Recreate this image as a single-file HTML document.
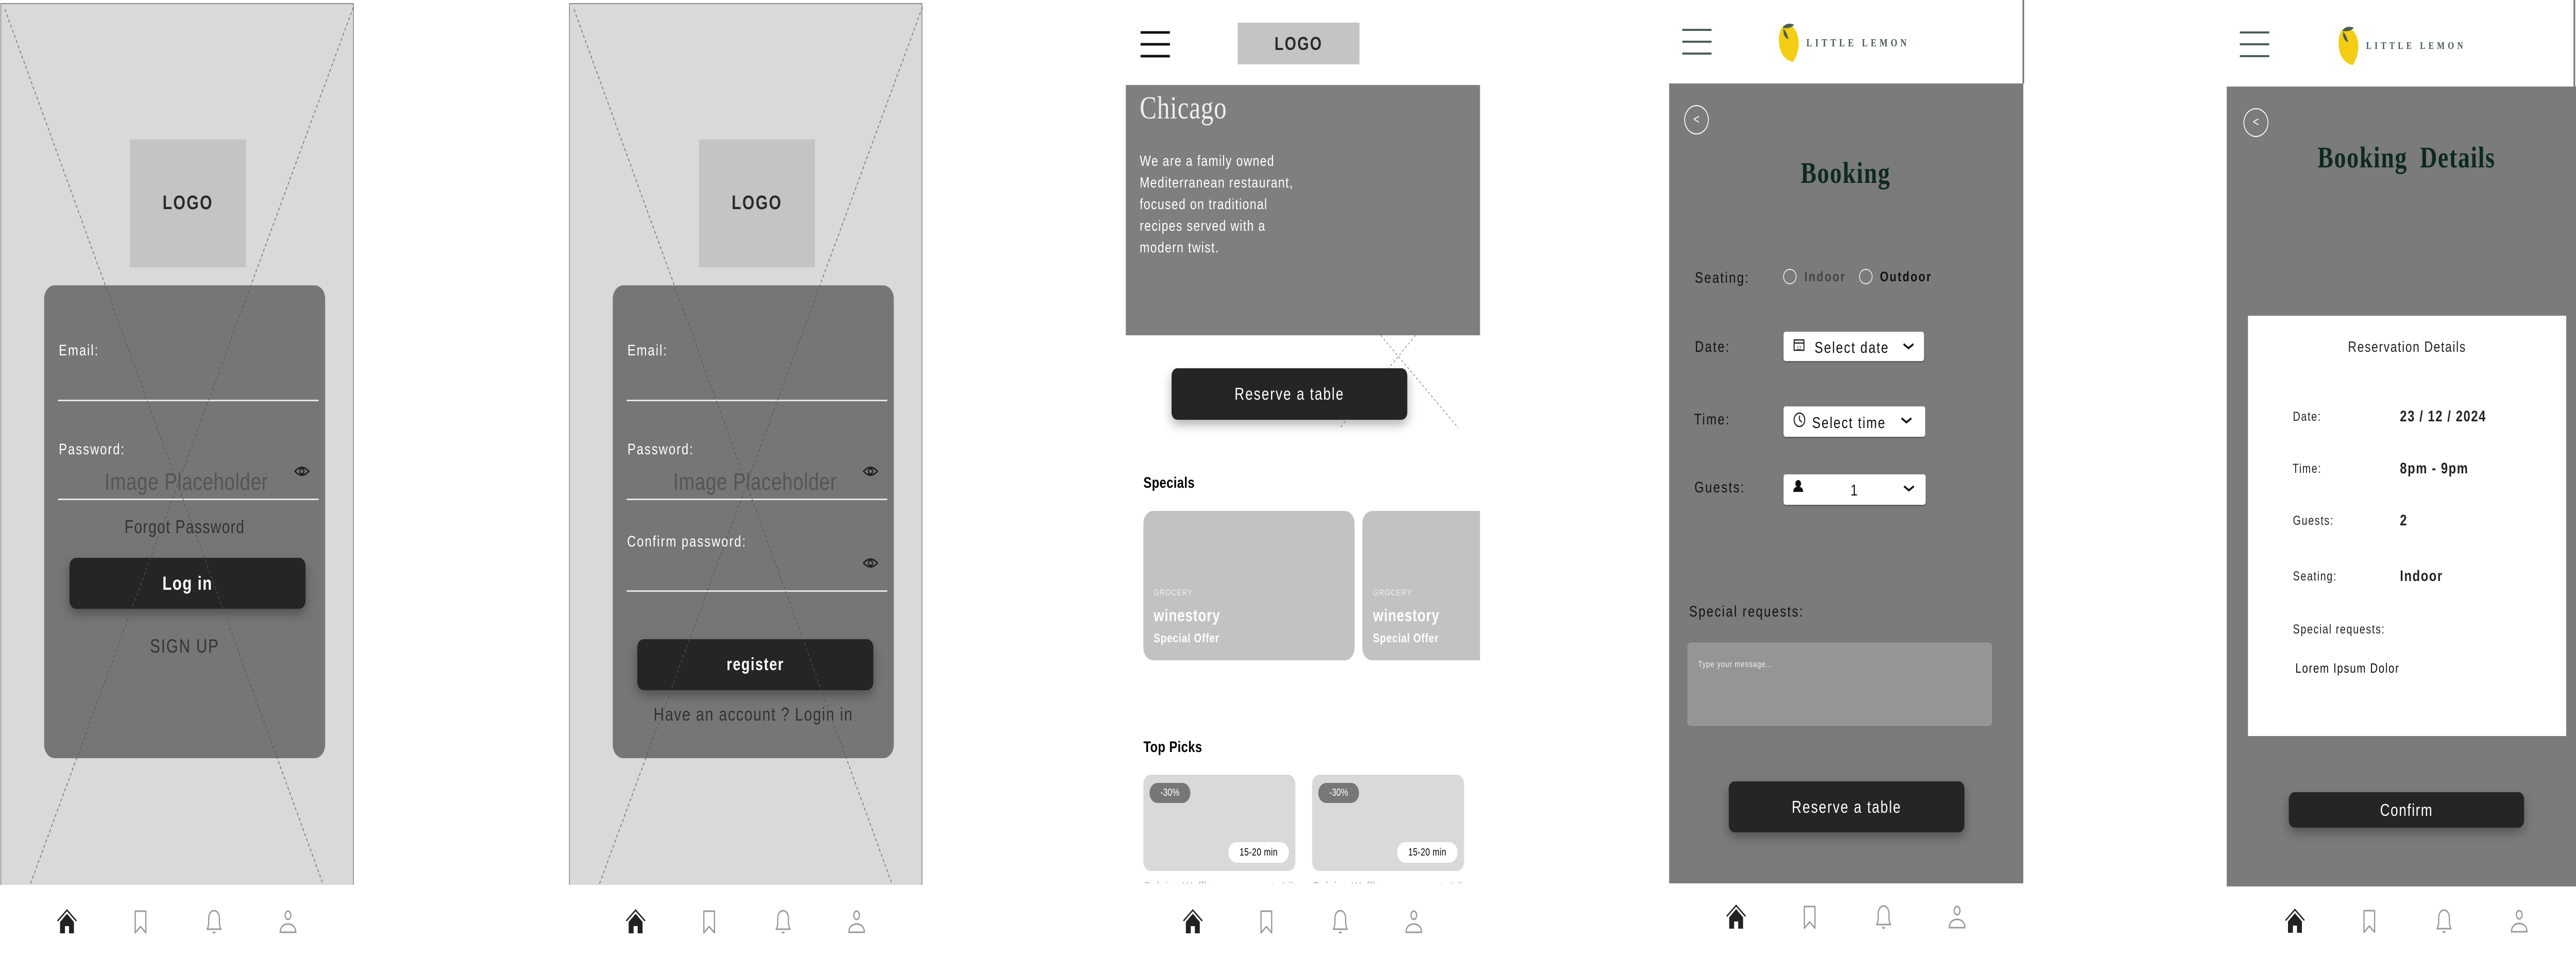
<!DOCTYPE html>
<html><head><meta charset="utf-8"><style>
*{margin:0;padding:0;box-sizing:border-box}
html,body{width:100%;height:1858px;background:#fff;overflow:hidden}
#w{position:absolute;left:0;top:0;width:6306px;height:1858px;transform-origin:0 0;transform:scaleX(0.7929);font-family:"Liberation Sans",sans-serif}
.a{position:absolute}
.t{position:absolute;white-space:nowrap;height:60px;line-height:60px}
.c{text-align:center}
.serif{font-family:"Liberation Serif",serif}
.btn{position:absolute;background:#252525;border-radius:16px;color:#fff;text-align:center;box-shadow:0 10px 22px rgba(0,0,0,.3)}
.line{position:absolute;height:3px;background:#e6e6e6}
.dd{position:absolute;background:#fff;border-radius:5px;box-shadow:0 2px 3px rgba(0,0,0,.3)}
</style></head><body><div id="w">

<!-- ============ SCREEN 1 ============ -->
<div class="a" style="left:1px;top:6px;width:865px;height:1712px;background:#d9d9d9;border:2px solid #8a8a8a;border-bottom:none"></div>
<div class="a" style="left:318px;top:271px;width:284px;height:248px;background:#c4c4c4"></div>
<div class="t c" style="left:318px;width:284px;top:364px;font-weight:bold;font-size:38px;letter-spacing:3px;color:#2a2a2a">LOGO</div>
<div class="a" style="left:108px;top:554px;width:688px;height:918px;background:#767676;border-radius:26px"></div>
<div class="t" style="left:144px;top:651px;font-size:30px;letter-spacing:2.5px;color:#fff">Email:</div>
<div class="line" style="left:142px;top:776px;width:638px"></div>
<div class="t" style="left:144px;top:843px;font-size:30px;letter-spacing:2.5px;color:#fff">Password:</div>
<div class="t" style="left:256px;top:905px;font-size:46px;letter-spacing:1px;color:#555">Image Placeholder</div>
<div class="line" style="left:142px;top:968px;width:638px"></div>
<div class="t c" style="left:108px;width:688px;top:993px;font-size:36px;letter-spacing:1.5px;color:#333">Forgot Password</div>
<div class="btn" style="left:170px;top:1083px;width:578px;height:99px;line-height:99px;font-size:37px;font-weight:bold;letter-spacing:2px">Log in</div>
<div class="t c" style="left:108px;width:688px;top:1225px;font-size:37px;letter-spacing:2.5px;color:#333">SIGN UP</div>

<!-- ============ SCREEN 2 ============ -->
<div class="a" style="left:1393px;top:6px;width:865px;height:1712px;background:#d9d9d9;border:2px solid #8a8a8a;border-bottom:none"></div>
<div class="a" style="left:1711px;top:271px;width:284px;height:248px;background:#c4c4c4"></div>
<div class="t c" style="left:1711px;width:284px;top:364px;font-weight:bold;font-size:38px;letter-spacing:3px;color:#2a2a2a">LOGO</div>
<div class="a" style="left:1500px;top:554px;width:688px;height:918px;background:#767676;border-radius:26px"></div>
<div class="t" style="left:1536px;top:651px;font-size:30px;letter-spacing:2.5px;color:#fff">Email:</div>
<div class="line" style="left:1534px;top:776px;width:638px"></div>
<div class="t" style="left:1536px;top:843px;font-size:30px;letter-spacing:2.5px;color:#fff">Password:</div>
<div class="t" style="left:1648px;top:905px;font-size:46px;letter-spacing:1px;color:#555">Image Placeholder</div>
<div class="line" style="left:1534px;top:968px;width:638px"></div>
<div class="t" style="left:1535px;top:1022px;font-size:30px;letter-spacing:2.5px;color:#fff">Confirm password:</div>
<div class="line" style="left:1534px;top:1146px;width:638px"></div>
<div class="btn" style="left:1560px;top:1241px;width:578px;height:99px;line-height:99px;font-size:34px;font-weight:bold;letter-spacing:2px">register</div>
<div class="t c" style="left:1500px;width:688px;top:1357px;font-size:36px;letter-spacing:2px;color:#333">Have an account ? Login in</div>

<svg class="a" style="left:0;top:0" width="2300" height="1730">
 <g stroke="#555" stroke-width="1.8" stroke-dasharray="6 5" fill="none" opacity=".8">
  <line x1="12" y1="18" x2="791" y2="1717"/><line x1="865" y1="14" x2="74" y2="1717"/>
  <line x1="1405" y1="18" x2="2184" y2="1717"/><line x1="2258" y1="14" x2="1467" y2="1717"/>
 </g>
 <g fill="none" stroke="#222" stroke-width="3">
  <path d="M722 915 Q739 900 756 915 Q739 930 722 915Z"/><circle cx="739" cy="915" r="5"/>
  <path d="M2114 915 Q2131 900 2148 915 Q2131 930 2114 915Z"/><circle cx="2131" cy="915" r="5"/>
  <path d="M2114 1093 Q2131 1078 2148 1093 Q2131 1108 2114 1093Z"/><circle cx="2131" cy="1093" r="5"/>
 </g>
</svg>

<!-- ============ SCREEN 3 ============ -->
<svg class="a" style="left:2792px;top:60px" width="72" height="52"><g stroke="#111" stroke-width="5"><line x1="0" y1="3" x2="72" y2="3"/><line x1="0" y1="26" x2="72" y2="26"/><line x1="0" y1="49" x2="72" y2="49"/></g></svg>
<div class="a" style="left:3030px;top:44px;width:298px;height:81px;background:#c4c4c4"></div>
<div class="t c" style="left:3030px;width:298px;top:55px;font-weight:bold;font-size:36px;letter-spacing:3px;color:#2a2a2a">LOGO</div>
<div class="a" style="left:2756px;top:165px;width:867px;height:486px;background:#7f7f7f"></div>
<div class="t serif" style="left:2790px;top:180px;font-size:62px;color:#eee;letter-spacing:1px">Chicago</div>
<div class="a" style="left:2790px;top:292px;font-size:29px;line-height:42px;letter-spacing:1.7px;color:#fff;white-space:nowrap">We are a family owned<br>Mediterranean restaurant,<br>focused on traditional<br>recipes served with a<br>modern twist.</div>
<svg class="a" style="left:3280px;top:651px" width="300" height="185"><g stroke="#888" stroke-width="1.5" stroke-dasharray="5 5"><line x1="100" y1="0" x2="290" y2="180"/><line x1="185" y1="0" x2="0" y2="180"/></g></svg>
<div class="btn" style="left:2868px;top:715px;width:577px;height:100px;line-height:100px;font-size:33px;letter-spacing:2.5px;border-radius:14px">Reserve a table</div>
<div class="t" style="left:2799px;top:908px;font-size:30px;font-weight:bold;letter-spacing:.5px">Specials</div>
<div class="a" style="left:2799px;top:992px;width:517px;height:290px;background:#c2c2c2;border-radius:24px"></div>
<div class="a" style="left:3335px;top:992px;width:288px;height:290px;background:#c2c2c2;border-radius:24px 0 0 24px"></div>
<div class="t" style="left:2824px;top:1121px;font-size:17px;letter-spacing:1.5px;color:#f0f0f0">GROCERY</div>
<div class="t" style="left:2824px;top:1165px;font-size:33px;font-weight:bold;letter-spacing:1px;color:#fff">winestory</div>
<div class="t" style="left:2824px;top:1210px;font-size:24px;font-weight:bold;letter-spacing:1px;color:#fff">Special Offer</div>
<div class="t" style="left:3361px;top:1121px;font-size:17px;letter-spacing:1.5px;color:#f0f0f0">GROCERY</div>
<div class="t" style="left:3361px;top:1165px;font-size:33px;font-weight:bold;letter-spacing:1px;color:#fff">winestory</div>
<div class="t" style="left:3361px;top:1210px;font-size:24px;font-weight:bold;letter-spacing:1px;color:#fff">Special Offer</div>
<div class="t" style="left:2799px;top:1421px;font-size:30px;font-weight:bold;letter-spacing:.5px">Top Picks</div>
<div class="a" style="left:2799px;top:1504px;width:372px;height:187px;background:#d9d9d9;border-radius:18px"></div>
<div class="a" style="left:3212px;top:1504px;width:372px;height:187px;background:#d9d9d9;border-radius:18px"></div>
<div class="a" style="left:2814px;top:1520px;width:100px;height:39px;background:#777;border-radius:20px;color:#fff;font-size:20px;line-height:39px;text-align:center">-30%</div>
<div class="a" style="left:3227px;top:1520px;width:100px;height:39px;background:#777;border-radius:20px;color:#fff;font-size:20px;line-height:39px;text-align:center">-30%</div>
<div class="a" style="left:3007px;top:1635px;width:148px;height:40px;background:#fff;border-radius:20px;font-size:20px;line-height:40px;text-align:center;letter-spacing:.5px">15-20 min</div>
<div class="a" style="left:3420px;top:1635px;width:148px;height:40px;background:#fff;border-radius:20px;font-size:20px;line-height:40px;text-align:center;letter-spacing:.5px">15-20 min</div>
<div class="t" style="left:2801px;top:1692px;font-size:24px;letter-spacing:1px">Belgian Waffles</div>
<div class="t" style="left:3105px;top:1692px;font-size:24px;color:#666">★ 4.7</div>
<div class="t" style="left:3214px;top:1692px;font-size:24px;letter-spacing:1px">Belgian Waffles</div>
<div class="t" style="left:3518px;top:1692px;font-size:24px;color:#666">★ 4.7</div>
<div class="a" style="left:2740px;top:1705px;width:890px;height:153px;background:linear-gradient(#fff0,#fff 12px)"></div>

<!-- ============ SCREEN 4 ============ -->
<svg class="a" style="left:4118px;top:56px" width="72" height="50"><g stroke="#495e57" stroke-width="4"><line x1="0" y1="2" x2="72" y2="2"/><line x1="0" y1="25" x2="72" y2="25"/><line x1="0" y1="48" x2="72" y2="48"/></g></svg>
<svg class="a" style="left:4352px;top:40px" width="56" height="82" viewBox="0 0 56 82">
 <path d="M14 10 C2 18 0 40 6 56 C12 72 28 80 38 80 C42 74 48 66 50 54 C54 38 48 20 36 12 C28 6 20 6 14 10Z" fill="#f4ce14"/>
 <path d="M12 14 C18 6 28 4 40 8 C34 14 22 16 12 14Z" fill="#495e57"/>
 <path d="M14 16 C20 20 24 28 26 36 C18 34 12 26 14 16Z" fill="#495e57"/>
</svg>
<div class="t serif" style="left:4422px;top:53px;font-size:21px;font-weight:bold;letter-spacing:7.5px;color:#495e57">LITTLE LEMON</div>
<div class="a" style="left:4951px;top:0;width:4px;height:162px;background:#777"></div>
<div class="a" style="left:4086px;top:162px;width:867px;height:1553px;background:#7b7b7b"></div>
<div class="a" style="left:4123px;top:204px;width:60px;height:57px;border:2px solid #fff;border-radius:50%;color:#fff;text-align:center;line-height:50px;font-size:26px">&lt;</div>
<div class="t c serif" style="left:4086px;width:864px;top:306px;font-size:58px;font-weight:bold;letter-spacing:2px;color:#0d2a1f">Booking</div>
<div class="t" style="left:4149px;top:510px;font-size:30px;letter-spacing:3px;color:#111">Seating:</div>
<div class="a" style="left:4365px;top:522px;width:33px;height:30px;border:2px solid #e5e5e5;border-radius:50%"></div>
<div class="t" style="left:4417px;top:507px;font-size:27px;letter-spacing:3px;color:#444;font-weight:bold">Indoor</div>
<div class="a" style="left:4551px;top:522px;width:33px;height:30px;border:2px solid #e5e5e5;border-radius:50%"></div>
<div class="t" style="left:4602px;top:507px;font-size:27px;letter-spacing:3px;color:#111;font-weight:bold">Outdoor</div>
<div class="t" style="left:4149px;top:644px;font-size:30px;letter-spacing:3px;color:#111">Date:</div>
<div class="t" style="left:4147px;top:785px;font-size:30px;letter-spacing:3px;color:#111">Time:</div>
<div class="t" style="left:4148px;top:917px;font-size:30px;letter-spacing:3px;color:#111">Guests:</div>
<div class="dd" style="left:4366px;top:644px;width:344px;height:57px"></div>
<div class="dd" style="left:4366px;top:789px;width:347px;height:59px"></div>
<div class="dd" style="left:4366px;top:921px;width:348px;height:59px"></div>
<div class="t" style="left:4442px;top:645px;font-size:31px;letter-spacing:2.5px;color:#111">Select date</div>
<div class="t" style="left:4436px;top:791px;font-size:31px;letter-spacing:2.5px;color:#111">Select time</div>
<div class="t" style="left:4530px;top:922px;font-size:31px;color:#111">1</div>
<svg class="a" style="left:4380px;top:640px" width="340" height="350">
 <g fill="none" stroke="#222" stroke-width="2.5">
  <rect x="12" y="20" width="24" height="20"/><line x1="12" y1="26" x2="36" y2="26"/>
  <circle cx="25" cy="175" r="13"/><polyline points="25,167 25,175 31,180"/>
 </g>
 <text x="24" y="39" font-size="10" text-anchor="middle" font-family="Liberation Sans" fill="#222">12</text>
 <g fill="none" stroke="#111" stroke-width="4">
  <polyline points="280,28 292,36 304,28"/><polyline points="275,172 287,180 299,172"/><polyline points="281,304 293,312 305,304"/>
 </g>
 <circle cx="22" cy="299" r="7" fill="#111"/><path d="M10 315 Q10 305 22 305 Q34 305 34 315Z" fill="#111"/>
</svg>
<div class="t" style="left:4135px;top:1158px;font-size:30px;letter-spacing:3px;color:#111">Special requests:</div>
<div class="a" style="left:4131px;top:1248px;width:745px;height:161px;background:#959595;border:1px solid #a5a5a5;border-radius:8px"></div>
<div class="t" style="left:4157px;top:1260px;font-size:17px;letter-spacing:1px;color:#eee">Type your message...</div>
<div class="btn" style="left:4232px;top:1517px;width:577px;height:99px;line-height:99px;font-size:33px;letter-spacing:2.5px;border-radius:14px">Reserve a table</div>

<!-- ============ SCREEN 5 ============ -->
<svg class="a" style="left:5483px;top:61px" width="72" height="50"><g stroke="#495e57" stroke-width="4"><line x1="0" y1="2" x2="72" y2="2"/><line x1="0" y1="25" x2="72" y2="25"/><line x1="0" y1="48" x2="72" y2="48"/></g></svg>
<svg class="a" style="left:5722px;top:46px" width="56" height="82" viewBox="0 0 56 82">
 <path d="M14 10 C2 18 0 40 6 56 C12 72 28 80 38 80 C42 74 48 66 50 54 C54 38 48 20 36 12 C28 6 20 6 14 10Z" fill="#f4ce14"/>
 <path d="M12 14 C18 6 28 4 40 8 C34 14 22 16 12 14Z" fill="#495e57"/>
 <path d="M14 16 C20 20 24 28 26 36 C18 34 12 26 14 16Z" fill="#495e57"/>
</svg>
<div class="t serif" style="left:5792px;top:59px;font-size:20px;font-weight:bold;letter-spacing:7.5px;color:#495e57">LITTLE LEMON</div>
<div class="a" style="left:6300px;top:0;width:4px;height:168px;background:#777"></div>
<div class="a" style="left:5451px;top:168px;width:855px;height:1553px;background:#7b7b7b"></div>
<div class="a" style="left:5492px;top:210px;width:61px;height:56px;border:2px solid #fff;border-radius:50%;color:#fff;text-align:center;line-height:49px;font-size:26px">&lt;</div>
<div class="t c serif" style="left:5451px;width:880px;top:276px;font-size:58px;font-weight:bold;letter-spacing:2px;color:#0d2a1f;word-spacing:14px">Booking Details</div>
<div class="a" style="left:5503px;top:613px;width:779px;height:816px;background:#fff"></div>
<div class="t c" style="left:5503px;width:779px;top:644px;font-size:29px;letter-spacing:2px;color:#222">Reservation Details</div>
<div class="t" style="left:5613px;top:779px;font-size:25px;letter-spacing:2px;color:#222">Date:</div>
<div class="t" style="left:5612px;top:880px;font-size:25px;letter-spacing:2px;color:#222">Time:</div>
<div class="t" style="left:5613px;top:981px;font-size:25px;letter-spacing:2px;color:#222">Guests:</div>
<div class="t" style="left:5613px;top:1089px;font-size:25px;letter-spacing:2px;color:#222">Seating:</div>
<div class="t" style="left:5613px;top:1192px;font-size:25px;letter-spacing:2px;color:#222">Special requests:</div>
<div class="t" style="left:5619px;top:1267px;font-size:26px;letter-spacing:2px;color:#111">Lorem Ipsum Dolor</div>
<div class="t" style="left:5875px;top:779px;font-size:30px;font-weight:bold;letter-spacing:2px;color:#222">23 / 12 / 2024</div>
<div class="t" style="left:5875px;top:880px;font-size:30px;font-weight:bold;letter-spacing:2px;color:#222">8pm - 9pm</div>
<div class="t" style="left:5875px;top:981px;font-size:30px;font-weight:bold;letter-spacing:2px;color:#222">2</div>
<div class="t" style="left:5875px;top:1089px;font-size:30px;font-weight:bold;letter-spacing:2px;color:#222">Indoor</div>
<div class="btn" style="left:5603px;top:1538px;width:576px;height:69px;line-height:69px;font-size:33px;letter-spacing:2px;border-radius:14px">Confirm</div>

<!-- ============ NAV ICONS ============ -->
<svg width="0" height="0" style="position:absolute">
 <defs>
  <g id="home"><polyline points="1,22 24,1 47,22" fill="none" stroke="#222" stroke-width="3"/><path d="M7 24 L24 8 L41 24 V46 H29 V32 H19 V46 H7Z" fill="#222"/></g>
  <g id="book"><path d="M11 3 H37 V45 L24 33 L11 45Z" fill="none" stroke="#9a9a9a" stroke-width="3" stroke-linejoin="round"/></g>
  <g id="bell"><path d="M7 38 C11 33 11 26 11 16 C11 8 17 2 24 2 C31 2 37 8 37 16 C37 26 37 33 41 38Z" fill="none" stroke="#9a9a9a" stroke-width="3" stroke-linejoin="round"/><path d="M21 43 Q24 47 27 43" fill="none" stroke="#9a9a9a" stroke-width="3"/></g>
  <g id="user"><ellipse cx="24" cy="11" rx="7" ry="8" fill="none" stroke="#9a9a9a" stroke-width="3"/><path d="M5 44 C5 33 14 28 24 28 C34 28 43 33 43 44Z" fill="none" stroke="#9a9a9a" stroke-width="3"/></g>
 </defs>
</svg>
<svg class="a" style="left:0;top:1740px" width="6306" height="100">
 <g transform="translate(140,26)"><use href="#home"/></g><g transform="translate(320,26)"><use href="#book"/></g><g transform="translate(500,26)"><use href="#bell"/></g><g transform="translate(681,26)"><use href="#user"/></g>
 <g transform="translate(1532,26)"><use href="#home"/></g><g transform="translate(1712,26)"><use href="#book"/></g><g transform="translate(1893,26)"><use href="#bell"/></g><g transform="translate(2073,26)"><use href="#user"/></g>
 <g transform="translate(2896,26)"><use href="#home"/></g><g transform="translate(3076,26)"><use href="#book"/></g><g transform="translate(3257,26)"><use href="#bell"/></g><g transform="translate(3437,26)"><use href="#user"/></g>
 <g transform="translate(4226,17)"><use href="#home"/></g><g transform="translate(4406,17)"><use href="#book"/></g><g transform="translate(4587,17)"><use href="#bell"/></g><g transform="translate(4767,17)"><use href="#user"/></g>
 <g transform="translate(5594,25)"><use href="#home"/></g><g transform="translate(5776,25)"><use href="#book"/></g><g transform="translate(5959,25)"><use href="#bell"/></g><g transform="translate(6143,25)"><use href="#user"/></g>
</svg>
</div>
<script>
(function(){var w=document.getElementById('w');var s=window.innerWidth/6306;if(s>0)w.style.transform='scaleX('+s+')';})();
</script>
</body></html>
